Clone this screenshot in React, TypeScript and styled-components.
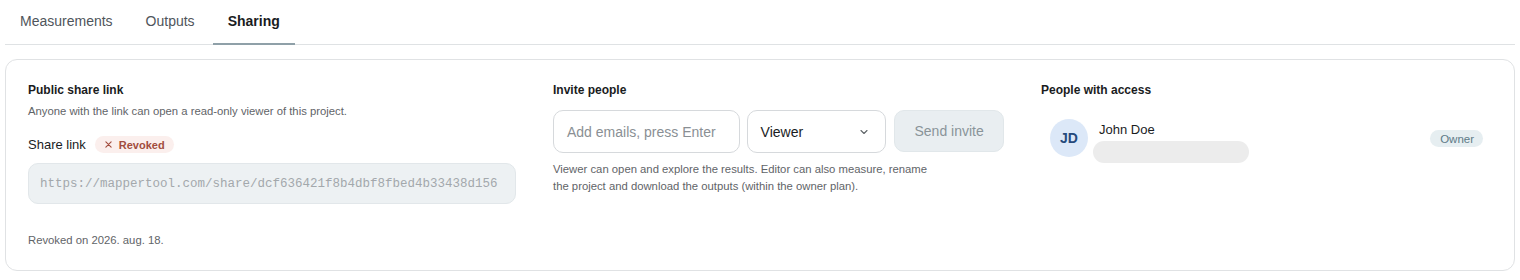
import React from "react";
import styled, { createGlobalStyle } from "styled-components";

const Global = createGlobalStyle`
  html, body { margin: 0; padding: 0; background: #ffffff; }
  body { font-family: "Liberation Sans", Arial, sans-serif; color: #1d1f21; }
  * { box-sizing: border-box; }
`;

const Page = styled.div`
  width: 1520px;
  height: 280px;
  padding: 0 5px;
  display: flex;
  flex-direction: column;
`;

const Tabs = styled.div`
  display: flex;
  height: 45px;
  border-bottom: 1px solid #dfe2e4;
`;

const Tab = styled.div<{ $active?: boolean }>`
  padding: 13px 15px 0;
  height: 45px;
  font-size: 14px;
  font-weight: ${(p) => (p.$active ? 700 : 500)};
  color: ${(p) => (p.$active ? "#1a1c1e" : "#4f555b")};
  border-bottom: 2px solid ${(p) => (p.$active ? "#8fa0a8" : "transparent")};
  margin-bottom: -1px;
  & + & { margin-left: 3px; }
`;

const Card = styled.div`
  margin-top: 14px;
  height: 212px;
  border: 1px solid #e0e2e4;
  border-radius: 12px;
  padding: 22px 22px 0;
  display: grid;
  grid-template-columns: 488px 451px 1fr;
  column-gap: 37px;
`;

const Column = styled.div`
  display: flex;
  flex-direction: column;
`;

const Heading = styled.div`
  font-size: 12px;
  font-weight: 700;
  color: #1a1c1e;
  line-height: 16px;
`;

const Muted = styled.div<{ $top?: number }>`
  font-size: 11.3px;
  line-height: 17px;
  color: #5f6468;
  margin-top: ${(p) => p.$top ?? 0}px;
`;

const LabelRow = styled.div`
  display: flex;
  align-items: center;
  gap: 9px;
  margin-top: 16px;
`;

const Label = styled.div`
  font-size: 13px;
  font-weight: 500;
  color: #1a1c1e;
`;

const StatusBadge = styled.span`
  display: inline-flex;
  align-items: center;
  gap: 6px;
  height: 17px;
  padding: 0 9px;
  border-radius: 9px;
  background: #fbefed;
  color: #a24d3e;
  font-size: 11px;
  font-weight: 600;
`;

const LinkField = styled.div`
  margin-top: 10px;
  height: 41px;
  border-radius: 10px;
  background: #edf1f3;
  border: 1px solid #e2e7ea;
  display: flex;
  align-items: center;
  padding: 0 11px;
  font-family: "Liberation Mono", "Courier New", monospace;
  font-size: 12.5px;
  color: #a3a8ac;
  white-space: nowrap;
`;

const InviteRow = styled.div`
  display: flex;
  gap: 7px;
  margin-top: 12px;
`;

const EmailInput = styled.div`
  width: 187px;
  height: 43px;
  border: 1px solid #d6d9dc;
  border-radius: 10px;
  display: flex;
  align-items: center;
  padding: 0 13px;
  font-size: 14px;
  color: #8a8f94;
`;

const Select = styled.div`
  width: 140px;
  height: 43px;
  border: 1px solid #d6d9dc;
  border-radius: 10px;
  display: flex;
  align-items: center;
  justify-content: space-between;
  padding: 0 15px 0 13px;
  font-size: 14px;
  font-weight: 500;
  color: #1a1c1e;
`;

const SendButton = styled.div`
  width: 110px;
  height: 42px;
  margin-left: 1px;
  border-radius: 10px;
  background: #e9eef1;
  border: 1px solid #e1e7ea;
  display: flex;
  align-items: center;
  justify-content: center;
  font-size: 14px;
  font-weight: 500;
  color: #8a9499;
`;

const PersonRow = styled.div`
  display: flex;
  align-items: flex-start;
  padding: 0 9px;
  margin-top: 21px;
`;

const Avatar = styled.div`
  width: 38px;
  height: 38px;
  border-radius: 50%;
  background: #dce8f8;
  color: #264a7c;
  font-weight: 700;
  font-size: 14px;
  display: flex;
  align-items: center;
  justify-content: center;
  flex-shrink: 0;
`;

const PersonInfo = styled.div`
  display: flex;
  flex-direction: column;
  margin-left: 5px;
  margin-top: 3px;
  flex: 1;
`;

const Name = styled.div`
  font-size: 13px;
  font-weight: 500;
  color: #1a1c1e;
  line-height: 16px;
  padding-left: 6px;
`;

const Skeleton = styled.div`
  width: 156px;
  height: 22px;
  border-radius: 11px;
  background: #ececec;
  margin-top: 3px;
`;

const RoleBadge = styled.span`
  height: 17px;
  padding: 0 9px 0 10px;
  border-radius: 9px;
  background: #e6eef1;
  color: #5e7b88;
  font-size: 11.5px;
  display: inline-flex;
  align-items: center;
  margin-top: 11px;
`;

const Chevron = () => (
  <svg width="12" height="12" viewBox="0 0 24 24" fill="none" stroke="#5f6468" strokeWidth="2.2" strokeLinecap="round" strokeLinejoin="round">
    <path d="M6 9l6 6 6-6" />
  </svg>
);

const XIcon = () => (
  <svg width="9" height="9" viewBox="0 0 24 24" fill="none" stroke="#a24d3e" strokeWidth="3" strokeLinecap="round">
    <path d="M5 5l14 14M19 5L5 19" />
  </svg>
);

export default function App() {
  return (
    <>
      <Global />
      <Page>
        <Tabs>
          <Tab>Measurements</Tab>
          <Tab>Outputs</Tab>
          <Tab $active>Sharing</Tab>
        </Tabs>
        <Card>
          <Column>
            <Heading>Public share link</Heading>
            <Muted $top={5}>Anyone with the link can open a read-only viewer of this project.</Muted>
            <LabelRow>
              <Label>Share link</Label>
              <StatusBadge>
                <XIcon />
                Revoked
              </StatusBadge>
            </LabelRow>
            <LinkField>https://mappertool.com/share/dcf636421f8b4dbf8fbed4b33438d156</LinkField>
            <Muted $top={28}>Revoked on 2026. aug. 18.</Muted>
          </Column>
          <Column>
            <Heading>Invite people</Heading>
            <InviteRow>
              <EmailInput>Add emails, press Enter</EmailInput>
              <Select>
                Viewer
                <Chevron />
              </Select>
              <SendButton>Send invite</SendButton>
            </InviteRow>
            <Muted $top={8}>
              Viewer can open and explore the results. Editor can also measure, rename
              <br />
              the project and download the outputs (within the owner plan).
            </Muted>
          </Column>
          <Column>
            <Heading>People with access</Heading>
            <PersonRow>
              <Avatar>JD</Avatar>
              <PersonInfo>
                <Name>John Doe</Name>
                <Skeleton />
              </PersonInfo>
              <RoleBadge>Owner</RoleBadge>
            </PersonRow>
          </Column>
        </Card>
      </Page>
    </>
  );
}
